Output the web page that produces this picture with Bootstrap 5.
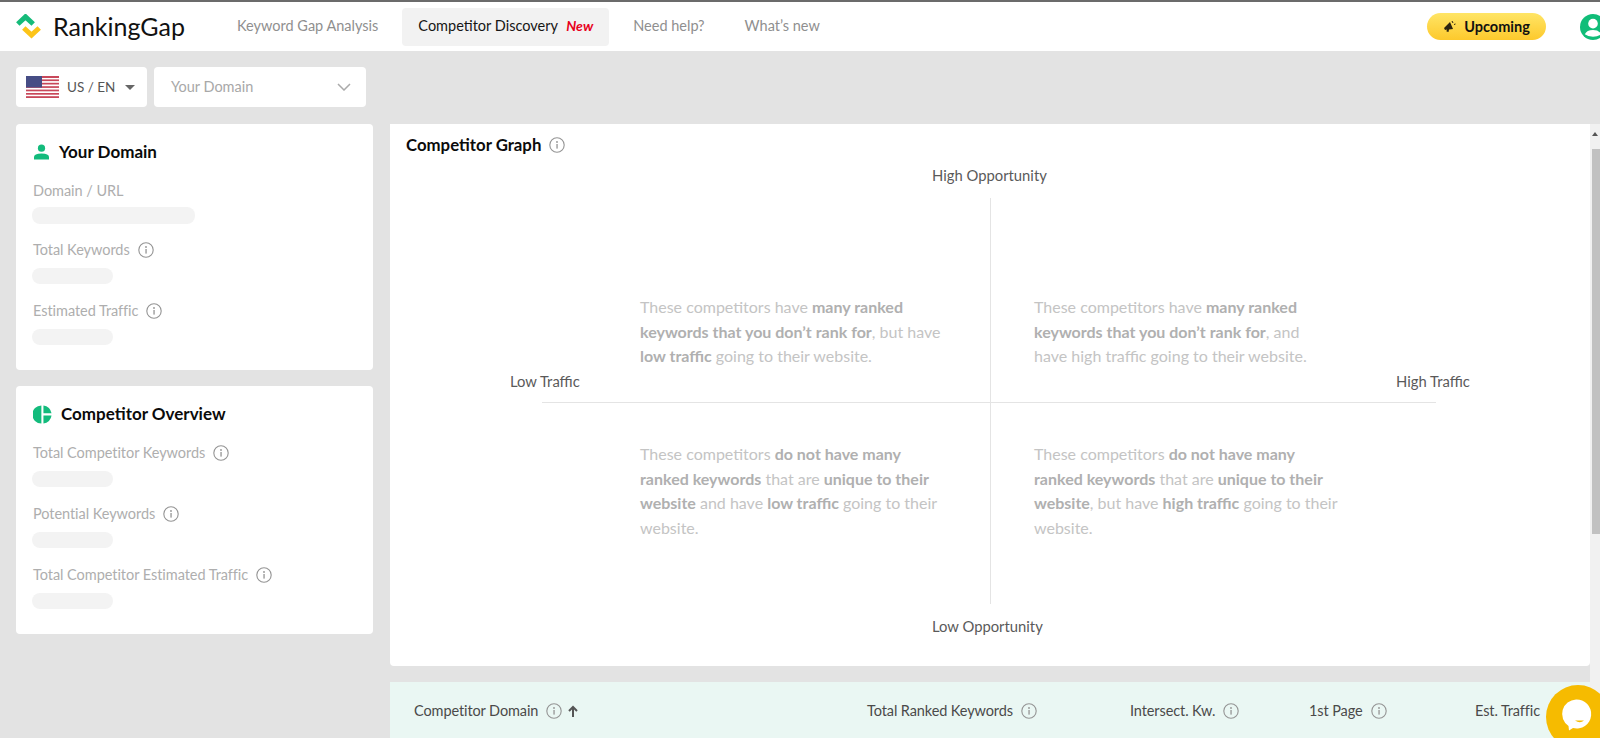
<!DOCTYPE html>
<html lang="en">
<head>
  <meta charset="UTF-8" />
  <meta name="viewport" content="width=device-width, initial-scale=1" />
  <title>RankingGap</title>
  <link rel="stylesheet" href="https://cdn.jsdelivr.net/npm/bootstrap@5.3.0/dist/css/bootstrap.min.css" />
  <style>
    html, body { height: 738px; overflow: hidden; }
    body { background: #e3e3e3; font-family: Lato, "Liberation Sans", sans-serif; font-size: 15px; color: #212529; }
    .top-bar { height: 51px; background: #fff; border-top: 2px solid #6b6b6b; padding: 0 0 0 16px; overflow: hidden; }
    .brand-name { font-size: 25px; color: #111; margin-left: 12px; width: 168px; line-height: 1; }
    .top-link { font-size: 14.5px; color: #8f8f8f; padding: 0 16px; height: 38px; line-height: 36px; border-radius: 4px; margin-right: 8px; text-decoration: none; white-space: nowrap; }
    .top-link.is-on { background: #f2f2f2; color: #161616; }
    .new-tag { color: #e8001c; font-style: italic; font-weight: 700; font-size: 14px; margin-left: 5px; }
    .upcoming-btn { width: 119px; height: 27px; border-radius: 14px; background: linear-gradient(#ffe566, #fdc92c); font-size: 14.5px; font-weight: 700; color: #111; margin-right: 34px; gap: 8px; }
    .user-icon { margin-right: -6px; }
    .page-body { padding: 16px 10px 0 16px; }
    .picker { background: #fff; height: 40px; border-radius: 4px; }
    .lang-picker { width: 131px; padding-left: 10px; font-size: 13.5px; color: #555; margin-right: 7px; }
    .caret-down { width: 0; height: 0; border-left: 5px solid transparent; border-right: 5px solid transparent; border-top: 5px solid #666; margin-left: 10px; }
    .domain-picker { width: 212px; padding: 0 15px 0 17px; color: #a8a8a8; font-size: 14.5px; }
    .main-row { margin-top: 17px; gap: 17px; }
    .side-col { width: 357px; flex: none; }
    .side-card { background: #fff; border-radius: 4px; padding: 16px 16px 0; margin-bottom: 16px; }
    .side-card.is-second { padding-top: 16px; }
    .side-title { font-size: 17px; font-weight: 700; color: #0b0b0b; height: 24px; margin-bottom: 17px; }
    .person-icon { margin: 0 10px 0 2px; }
    .pie-icon { margin: 0 9px 0 1px; }
    .field-label { font-size: 14.5px; letter-spacing: -.05px; color: #aeaeae; line-height: 20px; height: 20px; padding-left: 1px; }
    .ghost-bar { height: 16px; background: #f3f3f3; border-radius: 8px; width: 81px; margin: 8px 0 17px; }
    .ghost-bar.is-wide { width: 163px; margin-top: 6px; height: 17px; margin-bottom: 16px; }
    .ghost-end { height: 8px; }
    .info-dot { width: 16px; height: 16px; flex: none; margin-left: 8px; color: #949494; }
    .main-col { flex: 1; min-width: 0; }
    .graph-panel { background: #fff; border-radius: 0 0 4px 4px; height: 542px; padding: 9px 16px; position: relative; }
    .graph-title { font-size: 16.8px; font-weight: 700; color: #0b0b0b; height: 24px; }
    .axis-label { position: absolute; font-size: 14.8px; color: #5a5a5a; white-space: nowrap; line-height: 18px; }
    .axis-top { left: 542px; top: 42px; }
    .axis-bottom { left: 542px; top: 493px; }
    .axis-left { left: 120px; top: 248px; }
    .axis-right { left: 1006px; top: 248px; }
    .quad-grid { position: absolute; left: 152px; top: 74px; width: 894px; height: 406px; display: grid; grid-template-columns: 449px 445px; grid-template-rows: 205px 201px; }
    .quad-cell { font-size: 16px; line-height: 24.5px; color: #c4c4c4; }
    .quad-cell b { color: #b0b0b0; font-weight: 700; }
    .quad-tl { border-right: 1px solid #e4e4e4; border-bottom: 1px solid #e4e4e4; padding: 97px 40px 0 98px; }
    .quad-tr { border-bottom: 1px solid #e4e4e4; padding: 97px 101px 0 43px; }
    .quad-bl { border-right: 1px solid #e4e4e4; padding: 39px 42px 0 98px; }
    .quad-br { padding: 39px 94px 0 43px; }
    .table-head { margin-top: 16px; height: 60px; background: #eaf7f3; font-size: 14.5px; letter-spacing: -.1px; color: #4a4a4a; padding-bottom: 2px; padding-left: 24px; }
    .head-cell { white-space: nowrap; }
    .cell-domain { width: 453px; }
    .cell-total { width: 263px; }
    .cell-inter { width: 179px; }
    .cell-first { width: 166px; }
    .sort-arrow { margin-left: 5px; }
    .scroll-rail { position: fixed; top: 124px; right: 0; width: 10px; height: 614px; background: #f1f1f1; }
    .scroll-rail i { display: block; width: 8px; height: 385px; margin: 25px 0 0 2px; background: #c1c1c1; }
    .scroll-rail::before { content: ""; position: absolute; top: 8px; left: 2px; border-left: 3px solid transparent; border-right: 3px solid transparent; border-bottom: 4px solid #555; }
    .chat-bubble { position: fixed; left: 1546px; top: 685px; width: 64px; height: 64px; border-radius: 50%; background: #f6bb00; }
  </style>
</head>
<body>
  <!-- shared info icon -->
  <svg width="0" height="0" class="position-absolute">
    <symbol id="info" viewBox="0 0 16 16">
      <circle cx="8" cy="8" r="7.2" fill="none" stroke="currentColor" stroke-width="1.1"/>
      <rect x="7.4" y="7" width="1.3" height="4.6" fill="currentColor"/>
      <circle cx="8" cy="5" r=".9" fill="currentColor"/>
    </symbol>
  </svg>

  <nav class="top-bar d-flex align-items-center">
    <svg width="25" height="25" viewBox="0 0 25 25">
      <path d="M1.800 10 L9.500 2.800 L17.200 10" fill="none" stroke="#16bb7a" stroke-width="5"/>
      <path d="M7.800 14 L15.500 21.200 L23.200 14" fill="none" stroke="#fcc419" stroke-width="5"/>
    </svg>
    <span class="brand-name">RankingGap</span>
    <a class="top-link" href="#">Keyword Gap Analysis</a>
    <a class="top-link is-on" href="#">Competitor Discovery <span class="new-tag">New</span></a>
    <a class="top-link" href="#">Need help?</a>
    <a class="top-link" href="#">What’s new</a>
    <div class="ms-auto d-flex align-items-center">
      <div class="upcoming-btn d-flex align-items-center justify-content-center">
        <svg width="13" height="13" viewBox="0 0 13 13"><path d="M1 8 L7 2 L10 9 L6 9.500 L5.500 12 L3.500 11.500 L3.800 9.500 L2 10 Z" fill="#2c2410"/><path d="M9 1 L10 3 M11 4.500 L12.500 4" stroke="#2c2410"/></svg>
        Upcoming
      </div>
      <svg width="26" height="26" viewBox="0 0 27 27" class="user-icon">
        <circle cx="13.500" cy="13.500" r="13.500" fill="#10bd78"/>
        <circle cx="13.500" cy="10" r="5" fill="#fff"/>
        <path d="M5 21 Q7 16.500 13.500 16.500 Q20 16.500 22 21 Q19 23.500 13.500 23.500 Q8 23.500 5 21 Z" fill="#fff"/>
      </svg>
    </div>
  </nav>

  <div class="page-body">
    <div class="d-flex">
      <div class="picker lang-picker d-flex align-items-center">
        <svg width="33" height="22" viewBox="0 0 33 22" class="me-2">
          <rect width="33" height="22" fill="#fff"/>
          <g fill="#c8485a"><rect width="33" height="2"/><rect y="3.400" width="33" height="1.700"/><rect y="6.800" width="33" height="1.700"/><rect y="10.200" width="33" height="1.700"/><rect y="13.600" width="33" height="1.700"/><rect y="17" width="33" height="1.700"/><rect y="20.200" width="33" height="1.800"/></g>
          <rect width="16" height="11.500" fill="#464d85"/>
        </svg>
        US / EN
        <span class="caret-down"></span>
      </div>
      <div class="picker domain-picker d-flex align-items-center justify-content-between">
        Your Domain
        <svg width="14" height="8" viewBox="0 0 14 8"><path d="M1 1 L7 7 L13 1" fill="none" stroke="#aaa" stroke-width="1.500"/></svg>
      </div>
    </div>

    <div class="main-row d-flex">
      <div class="side-col">
        <div class="side-card">
          <div class="side-title d-flex align-items-center">
            <svg width="15" height="16" viewBox="1 0 15 16" class="person-icon"><circle cx="8.500" cy="4.200" r="3.600" fill="#13bb7c"/><path d="M1 15.500 V13 Q1 9.500 8.500 9.500 Q16 9.500 16 13 V15.500 Z" fill="#13bb7c"/></svg>
            Your Domain
          </div>
          <div class="field-label">Domain / URL</div>
          <div class="ghost-bar is-wide"></div>
          <div class="field-label d-flex align-items-center">Total Keywords <svg class="info-dot"><use href="#info"/></svg></div>
          <div class="ghost-bar"></div>
          <div class="field-label d-flex align-items-center">Estimated Traffic <svg class="info-dot"><use href="#info"/></svg></div>
          <div class="ghost-bar"></div>
          <div class="ghost-end"></div>
        </div>
        <div class="side-card is-second">
          <div class="side-title d-flex align-items-center">
            <svg width="19" height="19" viewBox="0 0 20 20" class="pie-icon"><path d="M8.800 .5 V19.500 A9.500 9.500 0 0 1 8.800 .5 Z" fill="#13bb7c"/><path d="M11 .5 A9.500 9.500 0 0 1 19.500 8.800 H11 Z" fill="#13bb7c"/><path d="M11 11 H19.500 A9.500 9.500 0 0 1 11 19.500 Z" fill="#13bb7c"/></svg>
            Competitor Overview
          </div>
          <div class="field-label d-flex align-items-center">Total Competitor Keywords <svg class="info-dot"><use href="#info"/></svg></div>
          <div class="ghost-bar"></div>
          <div class="field-label d-flex align-items-center">Potential Keywords <svg class="info-dot"><use href="#info"/></svg></div>
          <div class="ghost-bar"></div>
          <div class="field-label d-flex align-items-center">Total Competitor Estimated Traffic <svg class="info-dot"><use href="#info"/></svg></div>
          <div class="ghost-bar"></div>
          <div class="ghost-end"></div>
        </div>
      </div>

      <div class="main-col">
        <div class="graph-panel">
          <div class="graph-title d-flex align-items-center">Competitor Graph <svg class="info-dot"><use href="#info"/></svg></div>
          <span class="axis-label axis-top">High Opportunity</span>
          <span class="axis-label axis-bottom">Low Opportunity</span>
          <span class="axis-label axis-left">Low Traffic</span>
          <span class="axis-label axis-right">High Traffic</span>
          <div class="quad-grid">
            <div class="quad-cell quad-tl">These competitors have <b>many ranked keywords that you don’t rank for</b>, but have <b>low traffic</b> going to their website.</div>
            <div class="quad-cell quad-tr">These competitors have <b>many ranked keywords that you don’t rank for</b>, and have high traffic going to their website.</div>
            <div class="quad-cell quad-bl">These competitors <b>do not have many ranked keywords</b> that are <b>unique to their website</b> and have <b>low traffic</b> going to their website.</div>
            <div class="quad-cell quad-br">These competitors <b>do not have many ranked keywords</b> that are <b>unique to their website</b>, but have <b>high traffic</b> going to their website.</div>
          </div>
        </div>
        <div class="table-head d-flex align-items-center">
          <div class="head-cell cell-domain d-flex align-items-center">Competitor Domain <svg class="info-dot"><use href="#info"/></svg>
            <svg width="12" height="13" viewBox="0 0 12 13" class="sort-arrow"><path d="M6 12 V2 M2 6 L6 2 L10 6" fill="none" stroke="#555" stroke-width="2"/></svg>
          </div>
          <div class="head-cell cell-total d-flex align-items-center">Total Ranked Keywords <svg class="info-dot"><use href="#info"/></svg></div>
          <div class="head-cell cell-inter d-flex align-items-center">Intersect. Kw. <svg class="info-dot"><use href="#info"/></svg></div>
          <div class="head-cell cell-first d-flex align-items-center">1st Page <svg class="info-dot"><use href="#info"/></svg></div>
          <div class="head-cell d-flex align-items-center">Est. Traffic</div>
        </div>
      </div>
    </div>
  </div>

  <div class="scroll-rail"><i></i></div>
  <div class="chat-bubble">
    <svg width="64" height="64" viewBox="0 0 64 64">
      <path d="M30 14.500 A14.500 14.500 0 1 1 27 43 L23 45.500 L22.500 41 A14.500 14.500 0 0 1 30 14.500 Z" fill="#fff"/>
      <path d="M29 35.500 H38 Q34 39 29 35.500 Z" fill="#f6bb00"/>
    </svg>
  </div>
</body>
</html>
